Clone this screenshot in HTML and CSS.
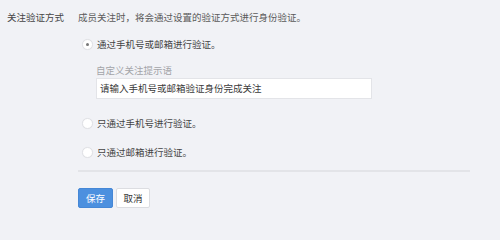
FILE: index.html
```html
<!DOCTYPE html>
<html lang="zh-CN">
<head>
<meta charset="utf-8">
<title>关注验证方式</title>
<link rel="stylesheet" href="styles.css">
</head>
<body>
<div class="page">
  <div class="row">
    <div class="label">关注验证方式</div>
    <div class="content">
      <div class="desc">成员关注时，将会通过设置的验证方式进行身份验证。</div>
      <div class="options">
        <label class="option option-first">
          <span class="radio checked"></span>
          <span class="opt-text">通过手机号或邮箱进行验证。</span>
        </label>
        <div class="custom">
          <div class="hint">自定义关注提示语</div>
          <div class="input">请输入手机号或邮箱验证身份完成关注</div>
        </div>
        <label class="option option-second">
          <span class="radio"></span>
          <span class="opt-text">只通过手机号进行验证。</span>
        </label>
        <label class="option option-third">
          <span class="radio"></span>
          <span class="opt-text">只通过邮箱进行验证。</span>
        </label>
      </div>
      <div class="divider"></div>
      <div class="actions">
        <button class="btn btn-primary">保存</button>
        <button class="btn btn-default">取消</button>
      </div>
    </div>
  </div>
</div>
</body>
</html>
```
FILE: styles.css
```css
* { box-sizing: border-box; }
html, body {
  margin: 0;
  padding: 0;
  background: #f1f2f6;
}
body {
  font-family: "Noto Sans CJK SC", "Noto Sans", sans-serif;
  font-size: 9.5px;
  color: #4a4a4a;
}
.page {
  padding-top: 10px;
}
.row {
  display: flex;
}
.label {
  width: 78px;
  padding-left: 7px;
  line-height: 14px;
  color: #444;
}
.content {
  width: 392px;
}
.desc {
  line-height: 14px;
  color: #5a5a5a;
}
.options {
  display: flex;
  flex-direction: column;
}
.option {
  display: flex;
  align-items: center;
  line-height: 14px;
  padding-left: 4px;
  color: #444;
}
.option-first { margin-top: 13px; }
.option-second { margin-top: 17px; }
.option-third { margin-top: 15px; }
.radio {
  width: 11px;
  height: 11px;
  border-radius: 50%;
  background: #fff;
  border: 1px solid #e0e1e5;
  box-shadow: 0 0 1px rgba(0,0,0,0.05);
  margin-right: 4px;
  display: flex;
  align-items: center;
  justify-content: center;
}
.radio.checked::after {
  content: "";
  width: 3px;
  height: 3px;
  border-radius: 50%;
  background: #777;
}
.custom {
  padding-left: 18px;
  margin-top: 12px;
}
.hint {
  line-height: 14px;
  color: #a3a4a8;
}
.input {
  margin-top: 1px;
  width: 276px;
  height: 21px;
  line-height: 19px;
  background: #fff;
  border: 1px solid #e3e4e8;
  padding-left: 3px;
  color: #3a3a3a;
}
.divider {
  margin-top: 11px;
  height: 2px;
  background: #e3e4e8;
}
.actions {
  margin-top: 16px;
  display: flex;
  gap: 3px;
}
.btn {
  height: 20px;
  padding: 0;
  font-family: inherit;
  font-size: 9.5px;
  border-radius: 2px;
  line-height: 18px;
  cursor: pointer;
}
.btn-primary {
  width: 35px;
  background: #4c90df;
  border: 1px solid #4587d6;
  color: #fff;
}
.btn-default {
  width: 34px;
  background: #fff;
  border: 1px solid #dcdde1;
  color: #333;
}
```
